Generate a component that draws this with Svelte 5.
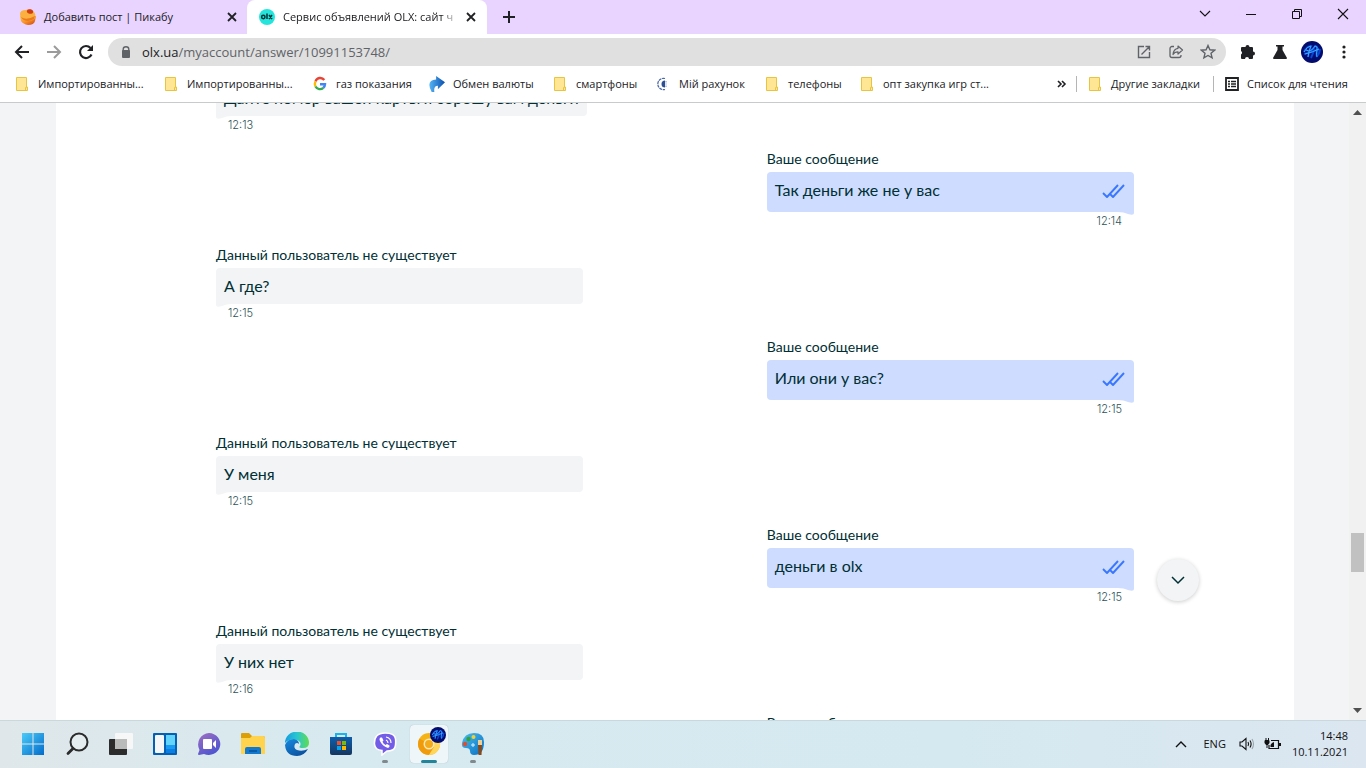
<script>
  const messages = [
    { mine: false, text: 'Дайте номер вашей карты я сброшу вам деньги', time: '12:13' },
    { mine: true, text: 'Так деньги же не у вас', time: '12:14' },
    { mine: false, text: 'А где?', time: '12:15' },
    { mine: true, text: 'Или они у вас?', time: '12:15' },
    { mine: false, text: 'У меня', time: '12:15' },
    { mine: true, text: 'деньги в olx', time: '12:15' },
    { mine: false, text: 'У них нет', time: '12:16' },
    { mine: true, text: '', time: '' }
  ];

  const bookmarks = [
    { icon: 'folder', text: 'Импортированны...', width: 130 },
    { icon: 'folder', text: 'Импортированны...', width: 130 },
    { icon: 'google', text: 'газ показания', width: 98 },
    { icon: 'arrow', text: 'Обмен валюты', width: 104 },
    { icon: 'folder', text: 'смартфоны', width: 84 },
    { icon: 'bank', text: 'Мій рахунок', width: 90 },
    { icon: 'folder', text: 'телефоны', width: 76 },
    { icon: 'folder', text: 'опт закупка игр ст...', width: 132 }
  ];
</script>

{#snippet folder()}
  <svg width="16" height="16" viewBox="0 0 16 16"><path d="M2.5 1.5h10v9.500h1v3.500h-11z" fill="#ffe694" stroke="#e8c443"/><path d="M11.500 14v-2.500l1.500-.5" fill="none" stroke="#e8c443"/></svg>
{/snippet}

{#snippet avatar(size)}
  <svg width={size} height={size} viewBox="0 0 22 22"><circle cx="11" cy="11" r="11" fill="#020b6e"/><path d="M3 11q3-6 7-6-2 4-3 11M5 9q5 3 9-4 3 0 2 4-1 5 0 7M3 13q8-2 15-5M10 17q3-5 3-11M15 15q3 0 4-7" fill="none" stroke="#0747d6" stroke-width="2"/><path d="M3 11q3-6 7-6-2 4-3 11M5 9q5 3 9-4 3 0 2 4-1 5 0 7M4 13q8-2 14-5" fill="none" stroke="#48b4ff" stroke-width=".9"/></svg>
{/snippet}

<div class="screen">
  <header>
    <div class="tabs">
      <a class="tab first" href="#pikabu">
        <svg width="18" height="18" viewBox="0 0 18 18"><defs><linearGradient id="pk" x1="0" y1="0" x2="1" y2="1"><stop offset="0" stop-color="#ffc64a"/><stop offset=".5" stop-color="#f79228"/><stop offset="1" stop-color="#c9400f"/></linearGradient></defs><path d="M1 8l16 0-1 5q-1 4-7 4-5-1-7-4z" fill="url(#pk)"/><path d="M1 6q0-4 6-4 5-2 8 2 2 2 1 6-2 3-7 3Q1 12 1 6z" fill="#fbb040"/><path d="M2 9q5 4 14-1l-1 3q-3 2-6 2-5 0-7-4z" fill="#ec7a1c"/><ellipse cx="11" cy="3.500" rx="3.200" ry="2.200" transform="rotate(15 11 3.500)" fill="#cf3d12"/></svg>
        <span>Добавить пост | Пикабу</span>
      </a>
      <button class="close" aria-label="Закрыть вкладку"><svg width="10" height="10" viewBox="0 0 10 10"><path d="M1 1l8 8M9 1l-8 8" stroke="#202124" stroke-width="1.800"/></svg></button>
      <div class="current">
        <a class="tab" href="#olx">
          <svg width="16" height="16" viewBox="0 0 16 16"><circle cx="8" cy="8" r="8" fill="#23e5db"/><circle cx="4.300" cy="8" r="1.700" fill="none" stroke="#002f34" stroke-width="1.500"/><path d="M8 4.500v5.500M10 6l3 4M13 6l-3 4" stroke="#002f34" stroke-width="1.500"/></svg>
          <span class="fade">Сервис объявлений OLX: сайт ч</span>
        </a>
        <button class="close" aria-label="Закрыть вкладку"><svg width="10" height="10" viewBox="0 0 10 10"><path d="M1 1l8 8M9 1l-8 8" stroke="#202124" stroke-width="1.800"/></svg></button>
      </div>
      <button class="plus" aria-label="Новая вкладка"><svg width="12" height="12" viewBox="0 0 12 12"><path d="M6 0v12M0 6h12" stroke="#202124" stroke-width="2"/></svg></button>
      <div class="controls">
        <button aria-label="Поиск вкладок"><svg width="12" height="12" viewBox="0 0 12 12"><path d="M1 3l5 5 5-5" fill="none" stroke="#111" stroke-width="1.100"/></svg></button>
        <button aria-label="Свернуть"><svg width="12" height="12" viewBox="0 0 12 12"><path d="M1 6.500h10" stroke="#111"/></svg></button>
        <button aria-label="Восстановить"><svg width="12" height="12" viewBox="0 0 12 12"><path d="M1.500 3.500h7v7h-7zM3.500 3.500v-2h7v7h-2" fill="none" stroke="#111"/></svg></button>
        <button aria-label="Закрыть"><svg width="12" height="12" viewBox="0 0 12 12"><path d="M1 1l10 10M11 1L1 11" stroke="#111" stroke-width="1.100"/></svg></button>
      </div>
    </div>

    <div class="toolbar">
      <button aria-label="Назад"><svg width="16" height="16" viewBox="0 0 16 16"><path d="M15 8H2M8 2L2 8l6 6" fill="none" stroke="#202124" stroke-width="2"/></svg></button>
      <button aria-label="Вперёд"><svg width="16" height="16" viewBox="0 0 16 16"><path d="M1 8h13M8 2l6 6-6 6" fill="none" stroke="#9b9b9b" stroke-width="2"/></svg></button>
      <button aria-label="Обновить"><svg width="16" height="16" viewBox="0 0 16 16"><path d="M13.500 10.500a6 6 0 1 1-1-6.500" fill="none" stroke="#202124" stroke-width="2.200"/><path d="M15 1v6H9z" fill="#202124"/></svg></button>
      <div class="address">
        <svg width="10" height="12" viewBox="0 0 10 12"><path d="M2.200 5V3.300a2.800 2.500 0 0 1 5.600 0V5" fill="none" stroke="#5f6368" stroke-width="1.400"/><rect x="1" y="4" width="8" height="8" rx="1" fill="#5f6368"/></svg>
        <a class="url" href="#address"><b>olx.ua</b>/myaccount/answer/10991153748/</a>
        <button aria-label="Открыть в приложении"><svg width="16" height="16" viewBox="0 0 16 16"><path d="M8 2.500H2.500v11h11V8M9.500 2.500h4v4M13.500 2.500l-8 8" fill="none" stroke="#5f6368" stroke-width="1.400"/></svg></button>
        <button aria-label="Поделиться"><svg width="16" height="16" viewBox="0 0 16 16"><path d="M6 2.500H4a2 2 0 0 0-2 2v7a2 2 0 0 0 2 2h7a2 2 0 0 0 2-2V11" fill="none" stroke="#5f6368" stroke-width="1.300"/><path d="M10 2l4.500 4L10 10V7.800Q6.500 7.800 5 10.500 5.500 5 10 4.300z" fill="none" stroke="#5f6368" stroke-width="1.200" stroke-linejoin="round"/></svg></button>
        <button aria-label="Добавить в закладки"><svg width="16" height="16" viewBox="0 0 16 16"><path d="M8 1.500l1.900 4.300 4.700.4-3.600 3.100 1.100 4.600L8 11.500l-4.100 2.400L5 9.300 1.400 6.200l4.700-.4z" fill="none" stroke="#5f6368" stroke-width="1.400"/></svg></button>
      </div>
      <button aria-label="Расширения"><svg width="16" height="16" viewBox="0 0 16 16"><path d="M1 4q0-1 1-1h3.500a2 2 0 1 1 4 0H12q1 0 1 1v3.500a2 2 0 1 1 0 4V14q0 1-1 1H9a2 2 0 0 0-4 0H2q-1 0-1-1v-3.500a2 2 0 0 0 0-3.500z" fill="#202124"/></svg></button>
      <button aria-label="Эксперименты"><svg width="16" height="16" viewBox="0 0 16 16"><path d="M4 1h8v1.500h-1.500V6l4.500 8q0 1-1 1H2q-1 0-1-1l4.500-8V2.500H4z" fill="#202124"/></svg></button>
      <button aria-label="Профиль">{@render avatar(22)}</button>
      <button aria-label="Меню"><svg width="16" height="16" viewBox="0 0 16 16"><g fill="#202124"><circle cx="8" cy="3" r="1.600"/><circle cx="8" cy="8" r="1.600"/><circle cx="8" cy="13" r="1.600"/></g></svg></button>
    </div>

    <nav>
      {#each bookmarks as b}
        <a href="#bookmark" style="width: {b.width}px">
          {#if b.icon === 'folder'}
            {@render folder()}
          {:else if b.icon === 'google'}
            <svg width="16" height="16" viewBox="0 0 16 16" fill="none" stroke-width="2.400"><path d="M12.300 4A5 5 0 0 0 3.500 5.500" stroke="#ea4335"/><path d="M3.500 5.500a5 5 0 0 0 0 5" stroke="#fbbc05"/><path d="M3.500 10.500a5 5 0 0 0 7.800 1.300" stroke="#34a853"/><path d="M8 8.200h5a5 5 0 0 1-1.700 3.600" stroke="#4285f4"/></svg>
          {:else if b.icon === 'arrow'}
            <svg width="16" height="16" viewBox="0 0 18 18"><defs><linearGradient id="ar" x1="0" y1="0" x2="1" y2="0"><stop offset="0" stop-color="#55b4f5"/><stop offset="1" stop-color="#0a4fae"/></linearGradient></defs><path d="M8 0l10 7-8 8v-4q-5 0-4 7H3Q-4 5 8 4z" fill="url(#ar)"/></svg>
          {:else}
            <svg width="16" height="16" viewBox="0 0 16 16"><path d="M10 4.500a3.500 3.500 0 1 0 0 7z" fill="#2f4f93"/><path d="M11 5v1.500M11 7.500v1M11 9.500V11" stroke="#7e93c0"/><path d="M10 2.500a5.700 5.700 0 1 0 0 11" fill="none" stroke="#4a68a6" stroke-width="1.200" stroke-dasharray="3 .7"/></svg>
          {/if}
          <span>{b.text}</span>
        </a>
      {/each}
      <button class="more" aria-label="Остальные закладки"><svg width="10" height="8" viewBox="0 0 10 8"><path d="M1 1l3 3-3 3M5 1l3 3-3 3" fill="none" stroke="#202124" stroke-width="1.600"/></svg></button>
      <i></i>
      <a class="other" href="#other">{@render folder()}<span>Другие закладки</span></a>
      <i></i>
      <a class="reading" href="#reading"><svg width="14" height="14" viewBox="0 0 14 14"><path d="M1 1h12v12H1z" fill="none" stroke="#202124" stroke-width="1.800"/><path d="M3 4.500h2m1 0h5M3 7h2m1 0h5M3 9.500h2m1 0h5" stroke="#202124" stroke-width="1.400"/></svg><span>Список для чтения</span></a>
    </nav>
  </header>

  <div class="view">
    <main>
      <ol>
        {#each messages as m}
          <li class:mine={m.mine}>
            <div class="who">{m.mine ? 'Ваше сообщение' : 'Данный пользователь не существует'}</div>
            {#if m.text}
              <div class="bubble">
                <p>{m.text}</p>
                {#if m.mine}
                  <svg width="24" height="24" viewBox="0 0 24 24" fill="none" stroke="#3a77ff" stroke-width="1.900"><path d="M1 13l4 4L16 5M8 14l3 3L22 5" stroke-linejoin="round"/></svg>
                {/if}
                <svg class="tail" width="16" height="3" viewBox="0 0 16 3"><path d="M0 0h16Q10 0 6 2Q0 4 0 1z" fill={m.mine ? '#cedcff' : '#f2f4f5'}/></svg>
              </div>
              <time>{m.time}</time>
            {/if}
          </li>
        {/each}
      </ol>
      <button class="down" aria-label="К последнему сообщению"><svg width="14" height="9" viewBox="0 0 14 9"><path d="M1 1l6 6 6-6" fill="none" stroke="#002f34" stroke-width="1.500"/></svg></button>
    </main>
    <div class="scroll">
      <svg width="9" height="5" viewBox="0 0 9 5"><path d="M4.500 0L9 5H0z" fill="#505050"/></svg>
      <div class="track"><div class="thumb"></div></div>
      <svg width="9" height="5" viewBox="0 0 9 5"><path d="M4.500 5L9 0H0z" fill="#505050"/></svg>
    </div>
  </div>

  <footer>
    <div class="apps">
      <button aria-label="Пуск"><svg width="24" height="24" viewBox="0 0 24 24"><defs><linearGradient id="wn" gradientUnits="userSpaceOnUse" x1="0" y1="0" x2="24" y2="24"><stop offset="0" stop-color="#4fd0fb"/><stop offset="1" stop-color="#0067c8"/></linearGradient></defs><path d="M1 1h10.500v10.500H1zM12.500 1H23v10.500H12.500zM1 12.500h10.500V23H1zM12.500 12.500H23V23H12.500z" fill="url(#wn)"/></svg></button>
      <button aria-label="Поиск"><svg width="24" height="24" viewBox="0 0 24 24"><circle cx="14" cy="10" r="8.500" fill="#e6edef" stroke="#2b2b2b" stroke-width="2"/><path d="M8 16.500l-5 5" stroke="#2b2b2b" stroke-width="2.800" stroke-linecap="round"/></svg></button>
      <button aria-label="Представление задач"><svg width="24" height="24" viewBox="0 0 24 24"><rect x="0" y="7" width="18" height="16" rx="1" fill="#2c2c2c"/><rect x="6" y="1" width="18" height="16" rx="1" fill="#f7f7f7"/><path d="M6 7h12v10H6z" fill="#b9bbbb"/></svg></button>
      <button aria-label="Виджеты"><svg width="24" height="24" viewBox="0 0 24 24"><rect x="0" y="1" width="24" height="22" rx="1" fill="#0560b3"/><rect x="2" y="3" width="9" height="18" rx="1" fill="#f6f6f8"/><path d="M13 3h9v10h-9z" fill="#63d5fc"/><path d="M13 13h9v4h-9z" fill="#1a9bf2"/><path d="M13 17h9v4h-9z" fill="#0b7fe3"/></svg></button>
      <button aria-label="Чат"><svg width="24" height="24" viewBox="0 0 24 24"><defs><linearGradient id="ch" x1="0" y1="0" x2="0.600" y2="1"><stop offset="0" stop-color="#a06fc0"/><stop offset="1" stop-color="#4e55d0"/></linearGradient></defs><path d="M12 1a11.500 11 0 1 1-5 21l-5 1q-1 0-1-1l1.500-4A11.500 11.500 0 0 1 12 1z" fill="url(#ch)"/><rect x="6" y="7" width="9" height="10" rx="1" fill="#fff"/><path d="M16 11l3-3v8l-3-3z" fill="#fff"/></svg></button>
      <button aria-label="Проводник"><svg width="24" height="24" viewBox="0 0 24 24"><path d="M0 2q0-1 1-1h7l3 3h11q2 0 2 2v10H0z" fill="#dca006"/><path d="M0 6h9l2-2h11q2 0 2 2v16H0z" fill="#ffd34d"/><path d="M4 17q0-2 2-2h12q2 0 2 2v5H4z" fill="#1379cf"/><path d="M8 19h8" stroke="#0a5aa4" stroke-width="2"/></svg></button>
      <button aria-label="Edge"><svg width="24" height="24" viewBox="0 0 24 24"><defs><linearGradient id="e1" x1="0" y1=".5" x2="1" y2=".5"><stop offset="0" stop-color="#149de0"/><stop offset=".5" stop-color="#29c6d0"/><stop offset="1" stop-color="#62dc50"/></linearGradient><linearGradient id="e2" x1="0" y1="0" x2=".7" y2="1"><stop offset="0" stop-color="#168be0"/><stop offset="1" stop-color="#0b509e"/></linearGradient></defs><path d="M0 11A12 11.500 0 0 1 24 11q0 5-6 5-5 0-3-2 2-4-3-6Q4 6 0 11z" fill="url(#e1)"/><path d="M0 13Q2 7 9 7q5 1 5 5-2-2-4 0-2 4 2 6 5 2 11-1-4 7-11 7Q1 24 0 13z" fill="url(#e2)"/></svg></button>
      <button aria-label="Microsoft Store"><svg width="24" height="24" viewBox="0 0 24 24"><defs><linearGradient id="st" x1="0" y1="0" x2="0" y2="1"><stop offset="0" stop-color="#0d5fae"/><stop offset="1" stop-color="#16365f"/></linearGradient></defs><path d="M7 6V2h10v4" fill="none" stroke="#19b3ed" stroke-width="2"/><path d="M1 5h22v16q0 2-2 2H3q-2 0-2-2z" fill="url(#st)"/><path d="M8 9h4v4H8z" fill="#f25022"/><path d="M13 9h4v4h-4z" fill="#7fba00"/><path d="M8 14h4v4H8z" fill="#00a4ef"/><path d="M13 14h4v4h-4z" fill="#ffb900"/></svg></button>
      <button class="open" aria-label="Viber"><svg width="24" height="24" viewBox="0 0 24 24"><path d="M12 1q10 0 10.500 6 .5 5-.5 8-1 4-8 4l-5 4v-4.500Q2 18 1.500 12 1 1 12 1z" fill="#735ce8" stroke="#fff" stroke-width="1.500"/><path d="M7.500 5.500Q5.500 7 7.500 10q2.500 4.500 7.500 6 2-1 1.500-2.500l-2.500-1.500-1.500 1Q10 11.500 9.500 9.500l1-1-1.500-3z" fill="#fff"/><path d="M13 5q5 1 5 6M13 8q2 1 2 3" fill="none" stroke="#fff" stroke-width="1.200"/></svg></button>
      <button class="active" aria-label="Chrome Canary"><svg width="24" height="24" viewBox="0 0 24 24"><circle cx="12" cy="12" r="11" fill="#f6b316"/><path d="M12 12L2.500 6.500A11 11 0 0 0 12 23l5-8z" fill="#f09b0c"/><path d="M12 7h10a11 11 0 0 1-10 16l5-8z" fill="#ffd65a"/><circle cx="12" cy="12" r="5.500" fill="#fbe8bb"/><circle cx="12" cy="12" r="4" fill="#f3ab1b"/></svg><span class="badge">{@render avatar(16)}</span></button>
      <button class="open" aria-label="Paint"><svg width="24" height="24" viewBox="0 0 24 24"><defs><linearGradient id="pt" x1="0" y1="0" x2="1" y2="1"><stop offset="0" stop-color="#49bdf0"/><stop offset="1" stop-color="#0a6fc0"/></linearGradient></defs><path d="M13 1q10 0 10 9 0 13-10 13-4 0-4-4 0-3-4-3-5 0-4-5Q3 1 13 1z" fill="url(#pt)"/><circle cx="4" cy="12" r="2.200" fill="#e04e2d"/><circle cx="7.500" cy="7" r="2.200" fill="#37a32f"/><circle cx="12.500" cy="5" r="2" fill="#f3d12e"/><path d="M10 13h4M12 11v4" stroke="#d9f3ff"/><path d="M17 8h4v5h-4z" fill="#f0cf95"/><path d="M17 13h4l-.5 10h-3z" fill="#874a1c"/></svg></button>
    </div>
    <div class="tray">
      <button aria-label="Скрытые значки"><svg width="12" height="8" viewBox="0 0 12 8"><path d="M1 7l5-5 5 5" fill="none" stroke="#111" stroke-width="1.400"/></svg></button>
      <button class="lang">ENG</button>
      <button class="sound" aria-label="Звук и батарея">
        <svg width="16" height="14" viewBox="0 0 16 14" fill="none" stroke="#111" stroke-width="1.100"><path d="M1 5h2l4-3.500v11L3 9H1z"/><path d="M9 5q1.200 2 0 4M11 3.500q2.200 3.500 0 7"/><path d="M13 2q3 5 0 10" stroke="#9ba5aa"/></svg>
        <svg width="17" height="14" viewBox="0 0 17 14"><path d="M7 3.500h7.500v8H5V8" fill="none" stroke="#111" stroke-width="1.200"/><path d="M15 6h2v3h-2zM8 6l2-1v5H6.500V8z" fill="#111"/><path d="M1 3.500h4V6L4 7.500H2L1 6z" fill="#111" stroke="#111"/><path d="M2 1v2M4.500 1v2M3 7v4" stroke="#111"/></svg>
      </button>
      <div class="clock"><span>14:48</span><span>10.11.2021</span></div>
    </div>
  </footer>
</div>

<style>
  :global(body) { margin: 0; }
  * { box-sizing: border-box; }
  .screen { height: 100vh; display: flex; flex-direction: column; overflow: hidden; background: #fff; font: 11px/16px "Open Sans", "Noto Sans", sans-serif; color: #202124; }
  button { display: flex; align-items: center; justify-content: center; padding: 0; border: 0; background: none; font: inherit; color: inherit; }
  a { color: inherit; text-decoration: none; }
  svg { flex: none; display: block; }
  header { flex: none; border-bottom: 1px solid #c9cacb; }
  .tabs { display: flex; height: 34px; background: #e8d4ff; }
  .tab { display: flex; align-items: center; gap: 8px; flex: 1; min-width: 0; white-space: nowrap; }
  .tab.first { flex: none; width: 224px; padding-left: 19px; gap: 7px; }
  .close { flex: none; width: 16px; }
  .current { display: flex; width: 240px; margin-left: 7px; padding: 0 8px 0 12px; background: #fff; border-radius: 8px 8px 0 0; }
  .fade { flex: 1; margin-right: 4px; mask-image: linear-gradient(90deg, #000 90%, transparent); }
  .plus { width: 44px; }
  .controls { display: flex; margin-left: auto; height: 28px; }
  .controls button { width: 46px; }
  .toolbar { display: flex; align-items: center; height: 36px; padding: 0 6px; }
  .toolbar > button { width: 32px; height: 32px; }
  .address { flex: 1; display: flex; align-items: center; height: 28px; margin: 0 6px; padding: 0 2px 0 13px; border-radius: 14px; background: #e0e0e0; font-size: 13px; line-height: 20px; }
  .address button { width: 32px; height: 28px; }
  .url { flex: 1; margin-left: 11px; color: #5f6368; }
  .url b { font-weight: 400; color: #202124; }
  nav { display: flex; align-items: center; height: 32px; padding: 0 15px 4px 14px; white-space: nowrap; }
  nav a { display: flex; align-items: center; gap: 8px; flex: none; margin-right: 19px; }
  nav i { width: 1px; height: 16px; background: #b5b5b5; }
  nav .more { margin: 0 9px 0 auto; }
  nav .other { width: 116px; margin: 0 10px; }
  nav .reading { width: 126px; margin: 0 0 0 11px; }

  .view { flex: 1; min-height: 0; display: flex; background: #f2f4f5; }
  main { flex: 1; min-width: 0; position: relative; overflow: hidden; margin: 0 55px 0 56px; padding: 0 160px; background: #fff; color: #002f34; font-family: Lato, Inter, sans-serif; }
  ol { list-style: none; margin: -45px 0 0; padding: 0; display: flex; flex-direction: column; }
  li { min-width: 40%; align-self: flex-start; margin-bottom: 18px; }
  li.mine { align-self: flex-end; }
  .who { font-size: 14px; line-height: 18px; margin-bottom: 4px; }
  .bubble { position: relative; display: flex; align-items: center; height: 36px; padding: 0 8px; border-radius: 4px 4px 4px 0; background: #f2f4f5; font-size: 16px; }
  .mine .bubble { height: 40px; border-radius: 4px 4px 0 4px; background: #cedcff; }
  p { flex: 1; margin: 0; line-height: 20px; }
  .mine p { margin-bottom: 4px; }
  .tail { position: absolute; top: 100%; left: 0; }
  .mine .tail { left: auto; right: 0; transform: scaleX(-1); }
  time { display: block; height: 16px; padding: 1px 12px 0; color: #2c5257; font-family: Inter, sans-serif; font-weight: 300; }
  .mine time { text-align: right; }
  .down { position: absolute; right: 95px; bottom: 119px; width: 42px; height: 42px; border-radius: 50%; background: #f2f4f5; box-shadow: 0 1px 4px #0003; }
  .scroll { width: 17px; display: flex; flex-direction: column; align-items: center; padding: 7px 0; background: #f1f1f1; }
  .track { flex: 1; width: 13px; padding-top: 418px; }
  .thumb { height: 39px; background: #c1c1c1; }

  footer { flex: none; height: 48px; display: flex; justify-content: space-between; border-top: 1px solid #c9d8dd; background: linear-gradient(90deg, #dfe7ea, #d7eaf0 25%, #d5e9f0 70%, #dbe6f1); color: #111; }
  .apps { display: flex; align-items: center; gap: 6px; padding: 0 0 2px 14px; }
  .apps button { position: relative; width: 38px; height: 38px; border-radius: 4px; }
  .apps .active { background: #eff6fa; box-shadow: 0 0 1px #0004; }
  .apps .open::after, .apps .active::after { content: ""; position: absolute; bottom: 0; width: 6px; height: 3px; border-radius: 2px; background: #80898d; }
  .apps .active::after { width: 16px; background: #24849a; }
  .badge { position: absolute; right: 2px; top: 2px; }
  .tray { display: flex; align-items: center; padding: 0 18px 2px 0; }
  .lang { margin: 0 13px 0 16px; }
  .sound { gap: 9px; }
  .clock { display: flex; flex-direction: column; align-items: flex-end; margin-left: 11px; }
</style>
